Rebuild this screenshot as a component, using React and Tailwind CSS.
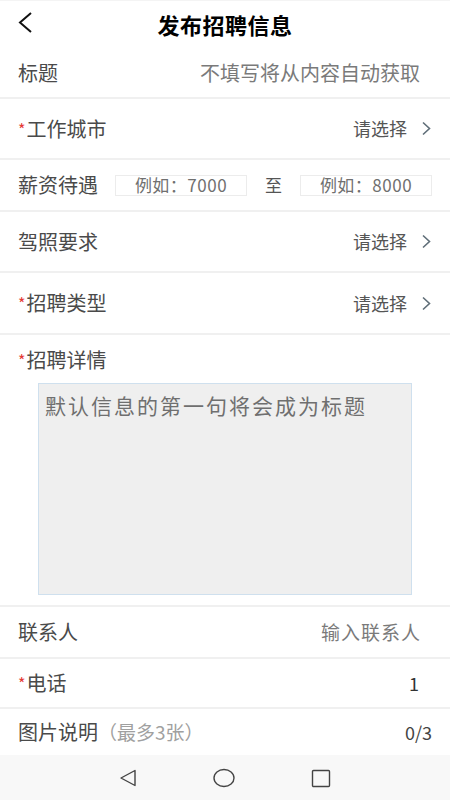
import React from "react";

const FONT = { fontFamily: '"Noto Sans CJK SC", "Noto Sans", sans-serif' };

function Chevron() {
  return (
    <svg width="11" height="15" viewBox="0 0 11 15" className="ml-[14px]">
      <path d="M2 1.5 L8.5 7.5 L2 13.5" fill="none" stroke="#5f6e78" strokeWidth="1.6" />
    </svg>
  );
}

function Label({ required, children }) {
  return (
    <div className="flex items-center text-[20px] text-[#4a4a4a]">
      {required && <span className="text-[#e53935] text-[16px] mr-[1px]">*</span>}
      {children}
    </div>
  );
}

function Row({ h, border = true, children }) {
  return (
    <div
      className={`flex items-center justify-between pl-[18px] pr-[18px] ${h} ${
        border ? "border-b-2 border-[#f0f0f0]" : ""
      }`}
    >
      {children}
    </div>
  );
}

function SelectRow({ h, label, required }) {
  return (
    <Row h={h}>
      <Label required={required}>{label}</Label>
      <div className="flex items-center text-[18px] text-[#555]">
        请选择
        <Chevron />
      </div>
    </Row>
  );
}

export default function App() {
  return (
    <div className="w-[450px] h-[800px] bg-white flex flex-col overflow-hidden" style={FONT}>
      <div className="relative h-[48px] flex items-center justify-center border-t border-[#f4f4f4]">
        <svg
          width="17"
          height="21"
          viewBox="0 0 17 21"
          className="absolute left-[17px] top-[11px]"
        >
          <path d="M14 1 L3 10.5 L14 20" fill="none" stroke="#111" strokeWidth="2" />
        </svg>
        <div className="text-[22px] font-bold text-black tracking-[0.5px]">发布招聘信息</div>
      </div>

      <Row h="h-[51px]">
        <Label>标题</Label>
        <div className="text-[20px] text-[#7a7a7a] mr-[12px]">不填写将从内容自动获取</div>
      </Row>

      <SelectRow h="h-[61px]" label="工作城市" required />

      <Row h="h-[52px]">
        <Label>薪资待遇</Label>
        <div className="flex items-center">
          <div className="w-[132px] h-[21px] border border-[#ececec] flex items-center justify-center text-[17px] text-[#707070] tracking-[0.5px] ml-[7px]">
            例如：7000
          </div>
          <div className="w-[53px] text-center text-[17px] text-[#555]">至</div>
          <div className="w-[132px] h-[21px] border border-[#ececec] flex items-center justify-center text-[17px] text-[#707070] tracking-[0.5px]">
            例如：8000
          </div>
        </div>
      </Row>

      <SelectRow h="h-[61px]" label="驾照要求" />
      <SelectRow h="h-[62px]" label="招聘类型" required />

      <div className="h-[272px] border-b-2 border-[#f0f0f0] pt-[12px] pb-[10px]">
        <div className="h-[26px] pl-[18px] flex items-center">
          <Label required>招聘详情</Label>
        </div>
        <div className="mt-[10px] ml-[38px] w-[374px] h-[212px] bg-[#efefef] border border-[#cfe0ee] pl-[6px] pt-[6px] text-[21px] text-[#6f6f6f] tracking-[2px] leading-[30px]">
          默认信息的第一句将会成为标题
        </div>
      </div>

      <Row h="h-[52px]">
        <Label>联系人</Label>
        <div className="text-[19px] text-[#7a7a7a] tracking-[1px] mr-[11px]">输入联系人</div>
      </Row>

      <Row h="h-[50px]">
        <Label required>电话</Label>
        <div className="text-[18px] text-[#333] pr-[13px]">1</div>
      </Row>

      <Row h="h-[46px]" border={false}>
        <div className="flex items-center text-[20px] text-[#4a4a4a]">
          图片说明
          <span className="text-[#a0a0a0] text-[19px]">（最多3张）</span>
        </div>
        <div className="text-[18px] text-[#444]">0/3</div>
      </Row>

      <div className="flex-1 bg-[#f8f8f8] flex items-center justify-center gap-[76px] pt-px">
        <svg width="18" height="18" viewBox="0 0 18 18">
          <path d="M16 1.5 L2 9 L16 16.5 Z" fill="none" stroke="#444" strokeWidth="1.4" strokeLinejoin="round" />
        </svg>
        <svg width="22" height="20" viewBox="0 0 22 20">
          <ellipse cx="11" cy="10" rx="10" ry="8.5" fill="none" stroke="#444" strokeWidth="1.4" />
        </svg>
        <svg width="20" height="19" viewBox="0 0 20 19">
          <rect x="1.5" y="1.5" width="17" height="16" rx="1" fill="none" stroke="#444" strokeWidth="1.4" />
        </svg>
      </div>
    </div>
  );
}
